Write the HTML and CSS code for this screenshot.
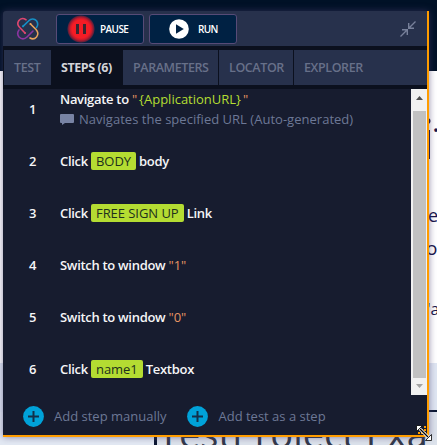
FILE: index.html
```html
<!DOCTYPE html>
<html lang="en">
<head>
<meta charset="utf-8">
<title>Recorder</title>
<link rel="stylesheet" href="styles.css">
</head>
<body>
<div class="page" aria-hidden="true">
  <div class="hero"></div>
  <div class="content"></div>
  <div class="section"></div>
  <div class="rule"></div>
  <div class="band"></div>
  <span class="behind b-i">i</span>
  <span class="behind b-dot">.</span>
  <span class="behind b-e">e</span>
  <span class="behind b-o">o</span>
  <span class="behind b-a">'a</span>
  <span class="behind b-heading">TestProject Exa</span>
</div>
<main class="panel">
  <header class="bar">
    <svg class="logo" width="22" height="22" viewBox="0 0 22 22" fill="none" stroke-width="1.6" stroke-linecap="round">
      <path stroke="#df4770" d="M9 1.700C6-.2 3.200.6 1.700 2.800C.3 5 .8 7.500 2.500 9.200L8 15"/>
      <path stroke="#168fc5" d="M6 8.300L11.500 3C14 .3 17.500.3 19.500 2.800C21 5 21 7.500 19.500 9.500"/>
      <path stroke="#e9a45c" d="M13.500 6L19 11.500C21.200 14 21.200 17 19.500 19C17.500 21.200 15 21.200 13 20"/>
      <path stroke="#8b35a0" d="M2 12C.5 14 .5 17 2 19C4.300 21.500 7.500 21.500 10 19L16 13"/>
      <circle cx="6" cy="8.300" r="1" fill="#168fc5"/><circle cx="13.500" cy="6" r="1" fill="#e9a45c"/><circle cx="8" cy="15" r="1" fill="#df4770"/>
    </svg>
    <button class="btn pause"><span class="rec"><i></i><i></i></span><span>PAUSE</span></button>
    <button class="btn run"><svg width="20" height="20" viewBox="0 0 20 20"><circle cx="10" cy="10" r="9.800" fill="#fff"/><path fill="#002143" d="M7 5.300L14.800 10L7 14.700Z"/></svg><span>RUN</span></button>
    <svg class="collapse" width="16" height="16" viewBox="0 0 16 16" fill="none" stroke="#77809a" stroke-width="1.400"><path d="M15.500.5L9 7M8.700 2V7.300H14M.5 15.500L7 9M2 8.700H7.300V14"/></svg>
  </header>
  <nav class="tabs">
    <span class="tab t1"><b>TEST</b></span><span class="tab t2 active"><b>STEPS (6)</b></span><span class="tab t3"><b>PARAMETERS</b></span><span class="tab t4"><b>LOCATOR</b></span><span class="tab t5"><b>EXPLORER</b></span>
  </nav>
  <section class="steps">
    <ol class="list">
      <li><span class="num">1</span><div><p>Navigate to <em>"</em><span class="var">{ApplicationURL}</span><em>"</em></p><p class="note"><svg width="14" height="11" viewBox="0 0 14 11"><path fill="#7883a4" d="M1 0H13Q14 0 14 1V8Q14 9 13 9H5L2 11V9H1Q0 9 0 8V1Q0 0 1 0Z"/></svg><span>Navigates the specified URL (Auto-generated)</span></p></div></li>
      <li><span class="num">2</span><p>Click <mark>BODY</mark> body</p></li>
      <li><span class="num">3</span><p>Click <mark>FREE SIGN UP</mark> Link</p></li>
      <li><span class="num">4</span><p>Switch to window <em>"1"</em></p></li>
      <li><span class="num">5</span><p>Switch to window <em>"0"</em></p></li>
      <li><span class="num">6</span><p>Click <mark>name1</mark> Textbox</p></li>
    </ol>
    <div class="scroll">
      <svg width="16" height="22" viewBox="0 0 16 22"><path fill="#505050" d="M5 11L8.500 7L12 11Z"/></svg>
      <div class="thumb"></div>
      <svg width="16" height="17" viewBox="0 0 16 17"><path fill="#a3a3a3" d="M5 6L8.500 10L12 6Z"/></svg>
    </div>
  </section>
  <footer class="foot">
    <span class="add"><svg width="21" height="21" viewBox="0 0 21 21"><circle cx="10.500" cy="10.500" r="10.400" fill="#00a2d9"/><path stroke="#12304a" stroke-width="2" d="M5 10.500H16M10.500 5V16"/></svg><span>Add step manually</span></span>
    <span class="add"><svg width="21" height="21" viewBox="0 0 21 21"><circle cx="10.500" cy="10.500" r="10.400" fill="#00a2d9"/><path stroke="#12304a" stroke-width="2" d="M5 10.500H16M10.500 5V16"/></svg><span>Add test as a step</span></span>
  </footer>
</main>
<svg class="cursor" width="17" height="17" viewBox="0 0 17 17"><path fill="#ff9c00" d="M8 1h2v2h-2zM5 4h2v2h-2zM8 4h2v2h-2zM2 7h2v2h-2zM5 7h2v2h-2zM8 7h2v2h-2z"/><path stroke="#fff" stroke-width="3" d="M3 3L13 13"/><path fill="#fff" stroke="#000" stroke-width=".8" d="M.5.5H6.500L.5 6.500ZM15.500 15.500H9.500L15.500 9.500Z"/><path stroke="#000" stroke-width="1.300" d="M4 4L12 12"/></svg>
</body>
</html>
```

FILE: styles.css
```css
* { box-sizing: border-box; }
body { margin: 0; width: 437px; height: 445px; overflow: hidden; position: relative; font-family: "Open Sans", sans-serif; }
p, ol { margin: 0; padding: 0; list-style: none; }

.page { height: 445px; position: relative; overflow: hidden; color: #17154a; }
.hero { height: 71px; background: #001126; }
.content { height: 292px; background: #fff; }
.section { height: 47px; background: #dfe6f2; }
.rule { height: 2px; background: linear-gradient(90deg, #dfe6f2 154px, #0b1732 154px); }
.band { height: 33px; background: linear-gradient(90deg, #e3e9f3 154px, #0b1732 154px, #0b1732 157px, #dce2eb 157px); }
.behind { position: absolute; white-space: nowrap; line-height: 1; }
.b-i { left: 421px; top: 111px; font-size: 54px; }
.b-dot { left: 432px; top: 106px; font-size: 30px; }
.b-e { left: 428px; top: 206px; font-size: 18px; }
.b-o { left: 426px; top: 239px; font-size: 19px; }
.b-a { left: 427px; top: 301px; font-size: 16px; }
.b-heading { left: 158px; top: 414px; font-size: 38px; color: #32384a; }

.panel { position: absolute; left: 3px; top: 11px; width: 426px; height: 426px; display: flex; flex-direction: column; background: #171c2f; border-right: 2px solid #ff9c00; border-bottom: 2px solid #ff9c00; border-top-left-radius: 3px; box-shadow: 0 0 7px rgba(70, 60, 110, .6); }
.bar { height: 35px; flex: none; display: flex; align-items: center; padding: 0 11px 0 14px; background: #27314c; border-top-left-radius: 3px; }
.logo { margin-right: 17px; overflow: visible; }
.btn { height: 30px; width: 88px; padding: 0; margin: 1px 5px 0 0; display: flex; align-items: center; background: #002143; border: 1px solid #574b77; border-radius: 3px; color: #fff; font: 600 10px "Open Sans", sans-serif; letter-spacing: -.6px; }
.rec { width: 28px; height: 28px; margin: 0 5px 0 10px; border-radius: 50%; display: flex; align-items: center; justify-content: center; gap: 4px; background: radial-gradient(circle, #f51c25 0 9px, #c41a2c 11px, #62203a 13px, #002143 14px); }
.rec i { width: 3px; height: 10px; background: #3a2630; }
.run { padding-left: 19px; }
.run svg { margin-right: 9px; }
.collapse { margin: 1px 0 0 auto; }

.tabs { height: 43px; flex: none; display: flex; gap: 1px; padding: 4px 0 4px 1px; background: #0b101e; }
.tab { display: flex; align-items: center; padding-left: 10px; background: #27314c; color: #677089; font-size: 12.500px; }
.tab b { font-weight: 600; white-space: nowrap; letter-spacing: -.4px; }
.t1 { width: 47px; }
.t2 { width: 70px; }
.t3 { width: 95px; }
.t4 { width: 74px; }
.t5 { flex: 1; }
.tab.active { background: #0b101e; color: #d3d4d8; padding-left: 9px; }
.active b { font-weight: 700; letter-spacing: -.45px; }

.steps { height: 306px; flex: none; display: flex; overflow: hidden; }
.list { flex: 1; margin-top: -6px; color: #f5f5f7; font-size: 13px; }
.list li { height: 52px; display: flex; align-items: center; white-space: nowrap; line-height: 20px; font-weight: 600; letter-spacing: -.3px; }
.num { width: 57px; padding-left: 26px; }
.var { margin: 0 2px; color: #b4dc32; font-weight: 400; letter-spacing: 0; }
em { font-style: normal; font-weight: 400; color: #e79563; letter-spacing: 0; }
.note { display: flex; align-items: center; gap: 5px; color: #6d7896; font-weight: 400; letter-spacing: .02px; }
mark { display: inline-block; height: 18px; line-height: 18px; padding: 0 5px; border-radius: 2px; background: #b4dc32; color: #20301d; font-weight: 400; letter-spacing: -.05px; }
.scroll { width: 16px; display: flex; flex-direction: column; background: #f1f1f1; }
.scroll svg { flex: none; }
.thumb { flex: 1; margin: 0 1px 0 2px; background: #c1c1c1; }

.foot { flex: 1; display: flex; align-items: center; gap: 21px; padding: 2px 0 0 20px; color: #6d7896; font-size: 13px; white-space: nowrap; }
.add { display: flex; align-items: center; gap: 10px; }
.cursor { position: absolute; left: 416px; top: 425px; }
```
